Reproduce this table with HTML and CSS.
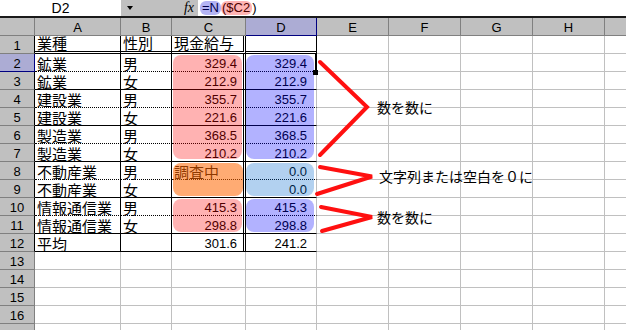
FILE: index.html
```html
<!DOCTYPE html>
<html lang="ja">
<head>
<meta charset="utf-8">
<title>Sheet</title>
<link rel="stylesheet" href="styles.css">
</head>
<body>
<div class="fbar">
  <div class="namebox">D2</div>
  <div class="fbtns"><span class="dd"></span><span class="fx">fx</span></div>
  <div class="formula"><span class="ref-b">=N</span><span class="ref-p">($C2</span><span>)</span></div>
</div>
<div class="sheet">
  <div class="ch"></div><div class="ch">A</div><div class="ch">B</div><div class="ch">C</div><div class="ch sel">D</div><div class="ch">E</div><div class="ch">F</div><div class="ch">G</div><div class="ch">H</div><div class="ch"></div>

  <div class="rh k">1</div><div class="c ca jp dbl">業種</div><div class="c cb jp dbl">性別</div><div class="c cc jp dbl">現金給与</div><div class="c cd d1 dbl"></div><div class="c"></div><div class="c"></div><div class="c"></div><div class="c"></div><div class="c"></div>

  <div class="rh k sel">2</div><div class="c ca jp dot">鉱業</div><div class="c cb jp dot">男</div><div class="c cc num dot">329.4</div><div class="c cd num dot">329.4</div><div class="c"></div><div class="c"></div><div class="c"></div><div class="c"></div><div class="c"></div>

  <div class="rh k">3</div><div class="c ca jp sol">鉱業</div><div class="c cb jp sol">女</div><div class="c cc num sol">212.9</div><div class="c cd num sol">212.9</div><div class="c"></div><div class="c"></div><div class="c"></div><div class="c"></div><div class="c"></div>

  <div class="rh k">4</div><div class="c ca jp dot">建設業</div><div class="c cb jp dot">男</div><div class="c cc num dot">355.7</div><div class="c cd num dot">355.7</div><div class="c"></div><div class="c"></div><div class="c"></div><div class="c"></div><div class="c"></div>

  <div class="rh k">5</div><div class="c ca jp sol">建設業</div><div class="c cb jp sol">女</div><div class="c cc num sol">221.6</div><div class="c cd num sol">221.6</div><div class="c"></div><div class="c"></div><div class="c"></div><div class="c"></div><div class="c"></div>

  <div class="rh k">6</div><div class="c ca jp dot">製造業</div><div class="c cb jp dot">男</div><div class="c cc num dot">368.5</div><div class="c cd num dot">368.5</div><div class="c"></div><div class="c"></div><div class="c"></div><div class="c"></div><div class="c"></div>

  <div class="rh k">7</div><div class="c ca jp sol">製造業</div><div class="c cb jp sol">女</div><div class="c cc num sol">210.2</div><div class="c cd num sol">210.2</div><div class="c"></div><div class="c"></div><div class="c"></div><div class="c"></div><div class="c"></div>

  <div class="rh k">8</div><div class="c ca jp dot">不動産業</div><div class="c cb jp dot">男</div><div class="c cc jp dot">調査中</div><div class="c cd num dot">0.0</div><div class="c"></div><div class="c"></div><div class="c"></div><div class="c"></div><div class="c"></div>

  <div class="rh k">9</div><div class="c ca jp sol">不動産業</div><div class="c cb jp sol">女</div><div class="c cc sol"></div><div class="c cd num sol">0.0</div><div class="c"></div><div class="c"></div><div class="c"></div><div class="c"></div><div class="c"></div>

  <div class="rh k">10</div><div class="c ca jp dot">情報通信業</div><div class="c cb jp dot">男</div><div class="c cc num dot">415.3</div><div class="c cd num dot">415.3</div><div class="c"></div><div class="c"></div><div class="c"></div><div class="c"></div><div class="c"></div>

  <div class="rh k">11</div><div class="c ca jp sol">情報通信業</div><div class="c cb jp sol">女</div><div class="c cc num sol">298.8</div><div class="c cd num sol">298.8</div><div class="c"></div><div class="c"></div><div class="c"></div><div class="c"></div><div class="c"></div>

  <div class="rh k">12</div><div class="c ca jp sol">平均</div><div class="c cb sol"></div><div class="c cc num sol">301.6</div><div class="c cd num sol">241.2</div><div class="c"></div><div class="c"></div><div class="c"></div><div class="c"></div><div class="c"></div>

  <div class="rh">13</div><div class="c"></div><div class="c"></div><div class="c"></div><div class="c"></div><div class="c"></div><div class="c"></div><div class="c"></div><div class="c"></div><div class="c"></div>
  <div class="rh">14</div><div class="c"></div><div class="c"></div><div class="c"></div><div class="c"></div><div class="c"></div><div class="c"></div><div class="c"></div><div class="c"></div><div class="c"></div>
  <div class="rh">15</div><div class="c"></div><div class="c"></div><div class="c"></div><div class="c"></div><div class="c"></div><div class="c"></div><div class="c"></div><div class="c"></div><div class="c"></div>
  <div class="rh">16</div><div class="c"></div><div class="c"></div><div class="c"></div><div class="c"></div><div class="c"></div><div class="c"></div><div class="c"></div><div class="c"></div><div class="c"></div>
  <div class="rh"></div><div class="c"></div><div class="c"></div><div class="c"></div><div class="c"></div><div class="c"></div><div class="c"></div><div class="c"></div><div class="c"></div><div class="c"></div>

  <div class="shape pink s-c1"></div>
  <div class="shape blue s-d1"></div>
  <div class="shape orange s-c2"></div>
  <div class="shape lblue s-d2"></div>
  <div class="shape pink s-c3"></div>
  <div class="shape blue s-d3"></div>

  <div class="active-edge"></div>
  <div class="fill-handle"></div>

  <svg class="arrows" width="626" height="312" viewBox="0 0 626 312">
    <polyline points="320,44 367,89 320,137" />
    <polyline points="320,149 372,158.5 317,176" />
    <polyline points="321,189 372,199 322,213" />
  </svg>

  <div class="note n1">数を数に</div>
  <div class="note n2">文字列または空白を０に</div>
  <div class="note n3">数を数に</div>
</div>
</body>
</html>
```

FILE: styles.css
```css
* { box-sizing: border-box; }

body {
  margin: 0;
  width: 626px;
  height: 330px;
  overflow: hidden;
  background: #fff;
  color: #000;
  font-family: "Liberation Sans", "Noto Sans CJK JP", sans-serif;
}

/* formula bar */
.fbar {
  display: flex;
  height: 18px;
  border-bottom: 2px solid #1a1a1a;
}
.namebox {
  width: 121px;
  background: #fff;
  text-align: center;
  font-size: 14px;
  line-height: 16px;
}
.fbtns {
  width: 77px;
  background: #c0c0c0;
  display: flex;
  align-items: center;
}
.dd {
  width: 0;
  height: 0;
  border-left: 3.5px solid transparent;
  border-right: 3.5px solid transparent;
  border-top: 4px solid #000;
  margin-left: 6px;
}
.fx {
  margin-left: auto;
  margin-right: 4px;
  font: italic 14px/16px "Liberation Serif", serif;
}
.formula {
  flex: 1;
  display: flex;
  align-items: center;
  padding-left: 2px;
  font-size: 13px;
  line-height: 14px;
}
.ref-b {
  background: #b4b4f4;
  color: #00004a;
  border-radius: 6px;
  padding: 0 2px;
}
.ref-p {
  background: #ffb4b4;
  color: #4a0000;
  border-radius: 6px;
  padding: 0 2px 0 1px;
}

/* sheet grid */
.sheet {
  position: relative;
  display: grid;
  grid-template-columns: 35px 86px 51px 74px 71px 72px 72px 72px 72px 22px;
  grid-auto-rows: 18px;
}
.ch, .rh {
  background: #c0c0c0;
  border-right: 1px solid #808080;
  border-bottom: 1px solid #808080;
  text-align: center;
  font: 13px/14px "Liberation Sans", sans-serif;
  padding-top: 3px;
}
.rh.k { border-right-color: #000; }
.ch.sel, .rh.sel {
  background: #acacd4;
  border-right-color: #000080;
  border-bottom-color: #000080;
}

.c {
  border-right: 1px solid #c0c0c0;
  border-bottom: 1px solid #c0c0c0;
  white-space: nowrap;
}
.ca, .cb { border-right-color: #000; }
.cc { border-right: 3px double #000; }
.d1 { border-right-color: #000; }
.dot { border-bottom: 1px dotted #000; }
.sol { border-bottom: 1px solid #000; }
.dbl { border-bottom: 3px double #000; }

.jp {
  font: 15px/15px "Noto Sans CJK JP", sans-serif;
  padding: 2px 0 0 2px;
}
.jp.dbl {
  line-height: 14px;
  padding-top: 0;
}
.num {
  font: 13px/15px "Liberation Sans", sans-serif;
  text-align: right;
  padding-top: 2px;
}
.cc.num { padding-right: 6px; }
.cd.num { padding-right: 9px; }

/* coloured reference shapes drawn over the cells */
.shape {
  position: absolute;
  border-radius: 8px;
}
.pink { background: rgba(255, 0, 0, 0.3); }
.blue { background: rgba(0, 0, 255, 0.3); }
.orange { background: rgba(255, 102, 0, 0.55); }
.lblue { background: rgba(0, 102, 204, 0.3); }

.s-c1 { left: 173px; top: 37px; width: 69px; height: 104px; }
.s-d1 { left: 246px; top: 37px; width: 68px; height: 104px; }
.s-c2 { left: 173px; top: 145px; width: 70px; height: 33px; }
.s-d2 { left: 246px; top: 145px; width: 68px; height: 33px; }
.s-c3 { left: 173px; top: 181px; width: 69px; height: 33px; }
.s-d3 { left: 246px; top: 181px; width: 68px; height: 33px; }

.active-edge {
  position: absolute;
  left: 315px;
  top: 36px;
  width: 2px;
  height: 17px;
  background: #000;
}
.fill-handle {
  position: absolute;
  left: 313px;
  top: 52px;
  width: 5px;
  height: 5px;
  background: #000;
}

.arrows {
  position: absolute;
  left: 0;
  top: 0;
  pointer-events: none;
}
.arrows polyline {
  fill: none;
  stroke: #ff1010;
  stroke-width: 4;
  stroke-linejoin: miter;
  stroke-linecap: round;
}

.note {
  position: absolute;
  font: 14px/18px "Noto Sans CJK JP", sans-serif;
  white-space: nowrap;
}
.n1 { left: 377px; top: 80px; }
.n2 { left: 379px; top: 149px; }
.n3 { left: 377px; top: 190px; }
```
